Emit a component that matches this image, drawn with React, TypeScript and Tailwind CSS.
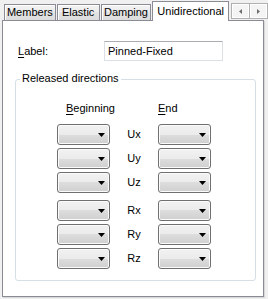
import React from "react";

const rows = [
  { label: "Ux", gapBefore: false },
  { label: "Uy", gapBefore: false },
  { label: "Uz", gapBefore: false },
  { label: "Rx", gapBefore: true },
  { label: "Ry", gapBefore: false },
  { label: "Rz", gapBefore: false },
];

/*--------- little combo box, Win7 look ----------*/
function Combo() {
  return (
    <div className="h-[21px] w-[53px] rounded-[3px] border border-[#707070] bg-[linear-gradient(#f2f2f2,#ebebeb_50%,#dddddd_50%,#cfcfcf)] shadow-[inset_0_0_0_1px_#fbfbfb] flex items-center justify-end pr-[4px]">
      <svg width="7" height="4" viewBox="0 0 7 4">
        <path d="M0 0h7L3.5 4z" fill="#000" />
      </svg>
    </div>
  );
}

function Tab({ text, w }: { text: string; w: string }) {
  return (
    <div
      className={`${w} h-[16px] border border-b-0 border-[#898c95] bg-[linear-gradient(#f3f3f3,#ebebeb_50%,#e3e3e3_50%,#dcdcdc)] shadow-[inset_1px_1px_0_#fff] flex items-center justify-center text-black`}>
      {text}
    </div>
  );
}

export default function App() {
  return (
    <div className="w-[268px] h-[299px] bg-[#f0f0f0] text-[11px] leading-[13px] text-black font-['Liberation_Sans',Arial,sans-serif] overflow-hidden">
      {/*--------- tab strip ----------*/}
      <div className="flex items-end h-[20px] pl-[4px] gap-[1px]">
        <Tab text="Members" w="w-[52px]" />
        <Tab text="Elastic" w="w-[43px]" />
        <Tab text="Damping" w="w-[51px]" />
        <div className="relative z-10 w-[77px] h-[20px] -mb-px border border-b-0 border-[#898c95] bg-white flex items-start justify-center pt-[3px]">
          Unidirectional
        </div>
        <div className="flex self-start mt-[3px] ml-[1px]">
          <div className="w-[19px] h-[16px] border border-[#b0b0b0] bg-[#f4f4f4] shadow-[inset_0_0_0_1px_#fff] flex items-center justify-center">
            <svg width="3" height="5" viewBox="0 0 3 5">
              <path d="M3 0v5L0 2.5z" fill="#6d6d6d" />
            </svg>
          </div>
          <div className="w-[19px] h-[16px] -ml-px border border-[#b0b0b0] bg-[#f4f4f4] shadow-[inset_0_0_0_1px_#fff] flex items-center justify-center">
            <svg width="3" height="5" viewBox="0 0 3 5">
              <path d="M0 0v5l3-2.5z" fill="#6d6d6d" />
            </svg>
          </div>
        </div>
      </div>

      {/*--------- page ----------*/}
      <div className="ml-[2px] w-[262px] h-[277px] border border-[#898c95] bg-white shadow-[1px_1px_0_#d8d8d8]">
        <div className="flex items-center mt-[20px] pl-[15px]">
          <span className="w-[86px]">
            <span className="underline underline-offset-[2px]">L</span>abel:
          </span>
          <div className="w-[119px] h-[20px] border border-[#dbdfe6] border-t-[#abadb3] flex items-center pl-[3px]">
            Pinned-Fixed
          </div>
        </div>

        <div className="relative mt-[18px] ml-[12px] w-[241px] h-[202px] border border-[#d5dfe5] rounded-[3px]">
          <span className="absolute left-[4px] -top-[8px] px-[2px] bg-white">Released directions</span>

          <div className="flex mt-[22px] pl-[50px]">
            <span className="w-[92px]">
              <span className="underline underline-offset-[2px]">B</span>eginning
            </span>
            <span>
              <span className="underline underline-offset-[2px]">E</span>nd
            </span>
          </div>

          <div className="flex flex-col gap-[3px] mt-[9px] pl-[41px]">
            {rows.map((r) => (
              <div key={r.label} className={`flex items-center ${r.gapBefore ? "mt-[4px]" : ""}`}>
                <Combo />
                <span className="w-[48px] text-center">{r.label}</span>
                <Combo />
              </div>
            ))}
          </div>
        </div>
      </div>
    </div>
  );
}
